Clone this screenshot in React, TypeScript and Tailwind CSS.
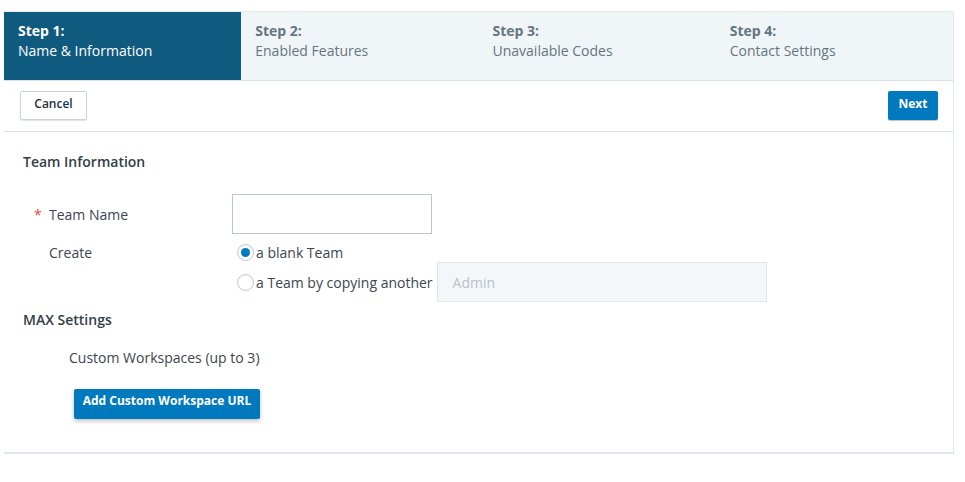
import React from "react";

const steps = [
  { n: "Step 1:", t: "Name & Information", active: true },
  { n: "Step 2:", t: "Enabled Features" },
  { n: "Step 3:", t: "Unavailable Codes" },
  { n: "Step 4:", t: "Contact Settings" },
];

function Radio({ checked }: { checked?: boolean }) {
  return (
    <span className="flex h-[17px] w-[17px] items-center justify-center rounded-full border border-[#bcc8d2] bg-white shadow-[inset_0_1px_1px_rgba(0,0,0,0.06)]">
      {checked && <span className="h-[9px] w-[9px] rounded-full bg-[#0079be]" />}
    </span>
  );
}

export default function App() {
  return (
    <div
      className="min-h-[482px] bg-white pl-[4px] pt-[11px] text-[#3b4650]"
      style={{ fontFamily: '"Open Sans", "Noto Sans", sans-serif' }}
    >
      <div className="w-[950px] border-b-2 border-r border-b-[#dfe7f0] border-r-[#e2e8ee]">
        {/* Stepper */}
        <div className="grid h-[70px] grid-cols-4 border-b border-t border-b-[#d8e0e7] border-t-[#e3e9ee] bg-[#f0f5f8]">
          {steps.map((s) => (
            <div
              key={s.n}
              className={
                "pl-[14px] pt-[8px] text-[14px] leading-[21px] " +
                (s.active ? "bg-[#0f5a7f] text-white" : "text-[#66757f]")
              }
            >
              <div className="font-bold">{s.n}</div>
              <div className="leading-[20px]">{s.t}</div>
            </div>
          ))}
        </div>

        {/* Toolbar */}
        <div className="flex h-[51px] items-start justify-between border-b border-[#d9dfe4] pl-[16px] pr-[15px] pt-[10px]">
          <button className="h-[29px] w-[67px] rounded-[2px] border border-[#cad3db] bg-white pb-[3px] text-[12px] font-semibold text-[#1e3140] shadow-[0_1px_1px_rgba(0,0,0,0.12)]">
            Cancel
          </button>
          <button className="h-[29px] w-[50px] rounded-[2px] bg-[#0079be] pb-[4px] text-[12px] font-bold text-white shadow-[0_1px_1px_rgba(0,0,0,0.25)]">
            Next
          </button>
        </div>

        {/* Content */}
        <div className="pb-[33px] pl-[19px] pt-[20px]">
          <div className="text-[14px] font-semibold leading-[20px] text-[#333d45]">Team Information</div>

          <div className="mt-[22px] flex items-center">
            <div className="flex w-[209px] items-center text-[14px]">
              <span className="w-[11px]" />
              <span className="w-[15px] text-[#e8443b]">*</span>
              <span className="text-[#3b4650]">Team Name</span>
            </div>
            <input className="h-[40px] w-[200px] border border-[#b9c7d0] bg-white outline-none" />
          </div>

          <div className="mt-[8px] flex">
            <div className="w-[209px] pl-[26px] text-[14px] leading-[21px]">Create</div>
            <div className="flex flex-col">
              <div className="flex h-[20px] items-center gap-[2px] pl-[5px] text-[14px]">
                <Radio checked />
                <span>a blank Team</span>
              </div>
              <div className="flex items-center">
                <div className="flex items-center gap-[2px] pl-[5px] text-[14px]">
                  <Radio />
                  <span>a Team by copying another</span>
                </div>
                <div className="ml-[4px] flex h-[40px] w-[330px] items-center border border-[#dfe5ea] bg-[#f4f7fa] pl-[15px] text-[14px] text-[#b9c1c8]">
                  Admin
                </div>
              </div>
            </div>
          </div>

          <div className="mt-[8px] text-[14px] font-semibold leading-[20px] text-[#333d45]">MAX Settings</div>

          <div className="mt-[18px] pl-[46px] text-[14px] leading-[20px]">Custom Workspaces (up to 3)</div>

          <div className="mt-[19px] pl-[51px]">
            <button className="h-[30px] w-[186px] rounded-[2px] bg-[#0079be] pb-[6px] text-[12px] font-bold text-white shadow-[0_2px_4px_rgba(0,0,0,0.25)]">
              Add Custom Workspace URL
            </button>
          </div>
        </div>
      </div>
    </div>
  );
}
